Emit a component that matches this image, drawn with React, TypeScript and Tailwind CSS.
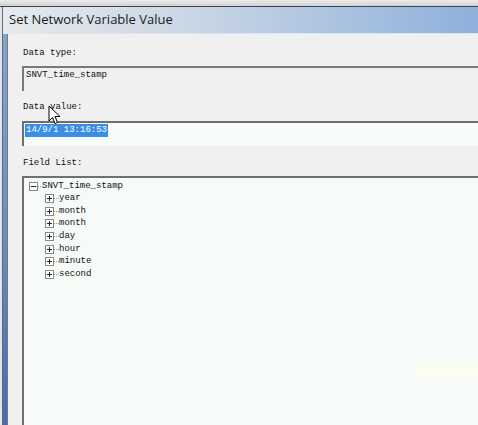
const mono = { fontFamily: '"Liberation Mono", "DejaVu Sans Mono", monospace' };

const fields = ["year", "month", "month", "day", "hour", "minute", "second"];

const Expander = ({ plus }: { plus?: boolean }) => (
  <svg width="9" height="9" viewBox="0 0 9 9" className="shrink-0">
    <rect x="0.5" y="0.5" width="8" height="8" fill="#fff" stroke="#8a8a8a" />
    <line x1="2" y1="4.5" x2="7" y2="4.5" stroke="#222" />
    {plus && <line x1="4.5" y1="2" x2="4.5" y2="7" stroke="#222" />}
  </svg>
);

const Dots = ({ w }: { w: number }) => (
  <svg width={w} height="9" viewBox={`0 0 ${w} 9`} className="shrink-0">
    <line x1="0" y1="4.5" x2={w} y2="4.5" stroke="#9a9a9a" strokeDasharray="1 1" />
  </svg>
);

const Cursor = () => (
  <svg width="14" height="20" viewBox="0 0 14 20" className="absolute left-[48px] top-[105px]">
    <path d="M1 1 L1 16 L4.5 12.5 L7 18.5 L9.5 17.5 L7 11.5 L12 11.5 Z" fill="#fff" stroke="#000" strokeWidth="1" strokeLinejoin="round" />
  </svg>
);

export default function App() {
  return (
    <div className="relative w-[478px] h-[425px] overflow-hidden bg-[#e4e4e4]" style={mono}>
      <div className="h-[7px] bg-gradient-to-b from-[#ececec] to-[#d2d2d2] border-b border-[#3c4650]" />
      <div className="flex flex-col ml-[2px] border-l border-[#5a6a80]">
        <div className="h-[27px] flex items-center pl-[6px] bg-gradient-to-r from-[#e6eaee] via-[#c9d6e4] via-40% to-[#8fb0dc] border-b border-[#dbe6f0]">
          <span className="text-[13px] text-[#1a1a1a]" style={{ fontFamily: '"Open Sans", "DejaVu Sans", sans-serif' }}>
            Set Network Variable Value
          </span>
        </div>
        <div className="flex h-[400px]">
          <div className="w-[5px] shrink-0 bg-gradient-to-b from-[#8aa3c8] via-[#6f8cbf] to-[#4c66a8] border-r border-[#6b7a8c]" />
          <div className="flex-1 min-w-0 overflow-hidden bg-[#f0f0f0] pl-[14px] pt-[14px] text-[9px] leading-[11px] text-[#111]">
            <div className="pl-[1px]">Data type:</div>
            <div className="mt-[7px] h-[25px] w-[500px] border-t-2 border-l-2 border-[#7a7a7a] bg-[#f0f0f0] pl-[2px] pt-[2px]">
              SNVT_time_stamp
            </div>
            <div className="mt-[11px] pl-[1px]">Data value:</div>
            <div className="mt-[8px] h-[25px] w-[500px] border-t-2 border-l-2 border-[#6e6e6e] bg-[#f7fbf8] pl-[1px] pt-[1px]">
              <span className="inline-block bg-[#3a8ee6] text-white px-[1px] py-[1px]">14/9/1 13:16:53</span>
            </div>
            <div className="mt-[12px] pl-[1px]">Field List:</div>
            <div className="mt-[7px] h-[300px] w-[500px] border-t-2 border-l-2 border-[#707070] bg-[#f6fbf8] pl-[5px] pt-[2px]">
              <div className="flex items-center h-[12px]">
                <Expander />
                <Dots w={4} />
                <span>SNVT_time_stamp</span>
              </div>
              <div className="ml-[16px] flex flex-col">
                {fields.map((f, i) => (
                  <div key={i} className="flex items-center h-[12.7px]">
                    <Expander plus />
                    <Dots w={5} />
                    <span>{f}</span>
                  </div>
                ))}
              </div>
            </div>
          </div>
        </div>
      </div>
      <Cursor />
      <div className="absolute left-[416px] top-[362px] w-[62px] h-[15px] bg-[#fbfdf2]" />
    </div>
  );
}
